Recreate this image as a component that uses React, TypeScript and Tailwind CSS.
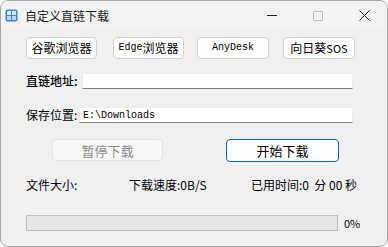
import React from 'react';

const cjk = { fontFamily: '"Noto Sans CJK SC", "Noto Sans", sans-serif' };
const mono = { fontFamily: '"Liberation Mono", "Noto Sans CJK SC", monospace' };

function Latin({ children }: { children: React.ReactNode }) {
  return (
    <span className="text-[10px]" style={mono}>
      {children}
    </span>
  );
}

function ToolButton({ children, width }: { children: React.ReactNode; width: string }) {
  return (
    <button
      className={`${width} h-[22px] rounded-[4px] border border-[#d0d0d0] bg-[#fdfdfd] text-[12px] leading-none text-black flex items-center justify-center`}
    >
      {children}
    </button>
  );
}

function AppIcon() {
  return (
    <svg width="13" height="13" viewBox="0 0 13 13">
      <rect x="0.5" y="0.5" width="12" height="12" rx="2" fill="#3a86d6" />
      <rect x="2" y="2" width="4" height="4" fill="#d8ecff" />
      <rect x="7" y="2" width="4" height="4" fill="#d8ecff" />
      <rect x="2" y="7" width="4" height="4" fill="#b9dbfb" />
      <rect x="7" y="7" width="4" height="4" fill="#b9dbfb" />
    </svg>
  );
}

export default function App() {
  return (
    <div className="w-[388px] h-[247px] bg-white">
      <div className="h-full rounded-[8px] border border-[#a6a6a6] bg-[#f0f0f0] overflow-hidden flex flex-col" style={cjk}>
        {/* title bar */}
        <div className="h-[29px] flex items-center bg-[#f3f3f3]">
          <div className="ml-[4px]">
            <AppIcon />
          </div>
          <span className="ml-[7px] text-[12px] text-[#1a1a1a]">自定义直链下载</span>
          <div className="ml-auto flex items-center h-full">
            <div className="w-[46px] h-full flex items-center justify-center">
              <div className="w-[10px] h-px bg-[#1a1a1a]" />
            </div>
            <div className="w-[46px] h-full flex items-center justify-center">
              <div className="w-[10px] h-[10px] border border-[#bdbdbd] rounded-[1px]" />
            </div>
            <div className="w-[46px] h-full flex items-center justify-center">
              <svg width="11" height="11" viewBox="0 0 11 11">
                <path d="M0.5 0.5 L10.5 10.5 M10.5 0.5 L0.5 10.5" stroke="#1a1a1a" strokeWidth="1" />
              </svg>
            </div>
          </div>
        </div>

        {/* body */}
        <div className="flex flex-col pl-[25px] text-[12px] text-black">
          <div className="mt-[7px] flex">
            <ToolButton width="w-[71px]">谷歌浏览器</ToolButton>
            <div className="ml-[16px]">
              <ToolButton width="w-[71px]">
                <Latin>Edge</Latin>浏览器
              </ToolButton>
            </div>
            <div className="ml-[13px]">
              <ToolButton width="w-[72px]">
                <Latin>AnyDesk</Latin>
              </ToolButton>
            </div>
            <div className="ml-[14px]">
              <ToolButton width="w-[72px]">
                向日葵<span className="text-[11px]">SOS</span>
              </ToolButton>
            </div>
          </div>

          <div className="mt-[14px] flex items-center h-[16px]">
            <span className="w-[56px] font-medium">直链地址:</span>
            <div className="w-[271px] h-[16px] bg-white border border-[#ececec] border-b-[#7c7c7c]" />
          </div>

          <div className="mt-[18px] flex items-center h-[16px]">
            <span className="w-[53px]">保存位置:</span>
            <div className="w-[274px] h-[16px] bg-white border border-[#ececec] border-b-[#7c7c7c] flex items-center pl-[3px]">
              <Latin>E:\Downloads</Latin>
            </div>
          </div>

          <div className="mt-[16px] flex">
            <button className="ml-[26px] w-[111px] h-[22px] rounded-[4px] border border-[#e2e2e2] bg-[#f8f8f8] text-[13px] leading-none text-[#8a8a8a] flex items-center justify-center">
              暂停下载
            </button>
            <button className="ml-[63px] w-[113px] h-[23px] rounded-[4px] border border-[#0067c0] bg-[#fdfdfd] text-[13px] leading-none text-black flex items-center justify-center">
              开始下载
            </button>
          </div>

          <div className="mt-[15px] h-[16px] flex items-center text-[12px]">
            <span className="w-[103px]">文件大小:</span>
            <span className="w-[122px]">下载速度:0B/S</span>
            <span>已用时间:0&nbsp;&nbsp;分 00 秒</span>
          </div>

          <div className="mt-[22px] flex items-center">
            <div className="w-[312px] h-[16px] bg-[#e6e6e6] border border-[#bcbcbc]" />
            <span className="ml-[6px] text-[11px]">0%</span>
          </div>
        </div>
      </div>
    </div>
  );
}
